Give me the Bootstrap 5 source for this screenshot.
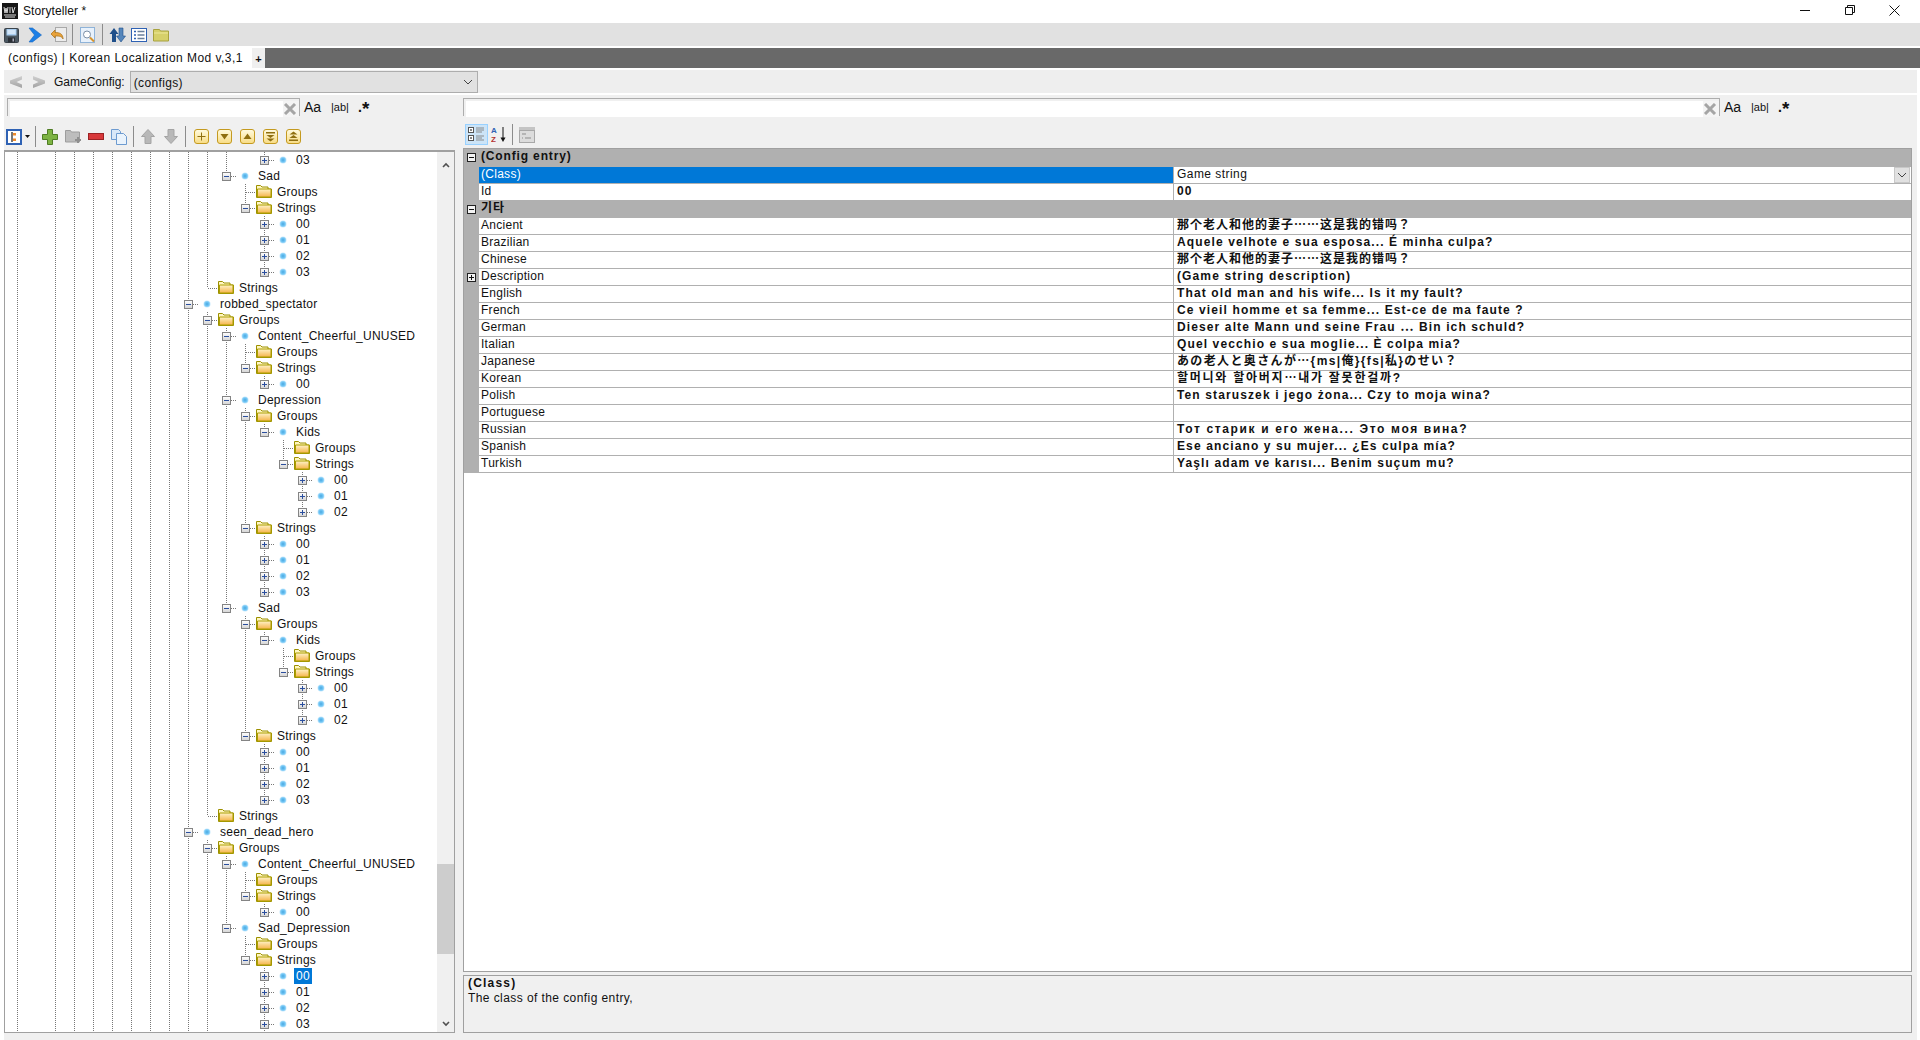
<!DOCTYPE html>
<html lang="en">
<head>
<meta charset="UTF-8" />
<title>Storyteller</title>
<link href="https://cdn.jsdelivr.net/npm/bootstrap@5.3.2/dist/css/bootstrap.min.css" rel="stylesheet" />
<style>
  html, body { height: 100%; }
  body { font-family: "Liberation Sans", "Noto Sans CJK KR", sans-serif; font-size: 12px; line-height: 16px; color: #111; background: #fff; overflow: hidden; }
  .app-shell { height: 1040px; }

  .title-bar { height: 23px; background: #fff; }
  .title-logo { margin: 3px 5px 0 2px; }
  .title-text { letter-spacing: .1px; line-height: 22px; }
  .win-btn { width: 45px; height: 20px; }
  .win-close { margin-right: 3px; }

  .main-tools { height: 23px; background: #e1e1e1; padding-left: 4px; margin-bottom: 2px; }
  .tool-ico { display: block; flex: none; }
  .tool-sep { width: 1px; height: 21px; background: #8c8c8c; flex: none; }

  .tab-strip { height: 20px; background: #696969; }
  .doc-tab { width: 252px; background: #fff; padding-left: 8px; line-height: 20px; letter-spacing: .45px; }
  .plus-tab { width: 13px; background: #efefef; text-align: center; font-weight: 700; font-size: 11px; line-height: 22px; }

  .page-wrap { padding: 2px 3px 0 4px; background: #fff; height: 972px; }
  .cfg-row { height: 23px; background: #eeeeee; margin-bottom: 2px; padding-left: 5px; }
  .cfg-label { margin: 0 5px 0 8px; line-height: 18px; }
  .cfg-select { width: 348px; height: 22px; background: #e1e1e1; border: 1px solid #adadad; padding-left: 3px; letter-spacing: .35px; }
  .cfg-select span { padding-top: 2px; }

  .work-area { background: #f0f0f0; height: 945px; padding-right: 5px; }
  .left-col { width: 451px; flex: none; margin-right: 8px; }
  .search-bar { height: 18px; margin-top: 3px; }
  .left-col .search-bar { padding-left: 3px; }
  .search-box { border: 1px solid #adadad; border-bottom: 0; padding: 2px 0 0 2px; height: 18px; flex: none; }
  .left-col .search-box { width: 293px; }
  .right-col .search-box { width: 1257px; }
  .search-input { border: 0; outline: 0; padding: 0; background: #fff; height: 16px; min-width: 0; }
  .search-x { background: #f4f4f4; width: 16px; height: 16px; }
  .opt-aa { font-size: 14px; margin-left: 4px; width: 27px; }
  .opt-ab { font-size: 11px; width: 27px; }
  .opt-dot { font-size: 14px; font-weight: 700; line-height: 16px; }
  .opt-star { font-size: 19px; font-weight: 700; line-height: 18px; margin-top: 3px; }

  .tree-tools { height: 23px; margin-top: 9px; margin-bottom: 2px; padding-left: 2px; }
  .tree-pane { height: 883px; border: 1px solid #a0a0a0; border-top-width: 2px; background: #fff; margin-bottom: 4px; }
  .tree-list { padding-left: 3px; width: 432px; overflow: hidden; }
  .tree-line { height: 16px; white-space: nowrap; }
  .tw-cell { width: 19px; height: 16px; flex: none; background-repeat: no-repeat; }
  .tw-v { background-image: repeating-linear-gradient(#777 0 1px, transparent 1px 2px); background-position: 9px 0; background-size: 1px 16px; }
  .tw-own-mid { background-image: repeating-linear-gradient(#777 0 1px, transparent 1px 2px), repeating-linear-gradient(90deg, #777 0 1px, transparent 1px 2px); background-position: 9px 0, 10px 8px; background-size: 1px 16px, 9px 1px; }
  .tw-own-end { background-image: repeating-linear-gradient(#777 0 1px, transparent 1px 2px), repeating-linear-gradient(90deg, #777 0 1px, transparent 1px 2px); background-position: 9px 0, 10px 8px; background-size: 1px 8px, 9px 1px; }
  .tw-exp { display: block; margin: 4px 0 0 5px; }
  .tw-dot { display: block; margin: 4px 0 0 5px; }
  .tw-folder { display: block; margin: 0 0 0 1px; }
  .tw-label { margin-left: 3px; letter-spacing: .25px; }
  .tw-label-on { margin-left: 1px; padding: 0 2px; background: #0078d7; color: #fff; }

  .tree-scroll { width: 17px; margin-left: 1px; background: #f0f0f0; flex: none; }
  .scroll-thumb { height: 90px; background: #cdcdcd; margin-bottom: 61px; }
  .scroll-end { height: 17px; }

  .right-col { min-width: 0; }
  .grid-tools { height: 21px; margin-top: 8px; margin-bottom: 3px; padding-left: 2px; }
  .sort-on { width: 23px; height: 21px; background: #cce4f7; border: 1px solid #99d1ff; }
  .prop-grid { height: 824px; border: 1px solid #a0a0a0; background: #fff; }
  .prop-head { height: 17px; background: #b0b0b0; font-weight: 700; letter-spacing: .85px; line-height: 15px; }
  .prop-head-first { height: 18px; }
  .prop-head-text { padding-left: 2px; }
  .prop-gutter { width: 15px; flex: none; background: #b0b0b0; }
  .prop-row { height: 17px; border-bottom: 1px solid #b0b0b0; line-height: 14px; }
  .prop-name { width: 695px; flex: none; padding-left: 2px; letter-spacing: .28px; border-right: 1px solid #b0b0b0; }
  .prop-name-on { background: #0078d7; color: #fff; }
  .prop-value { padding-left: 3px; font-weight: 700; letter-spacing: 1.12px; white-space: nowrap; min-width: 0; }
  .prop-value-plain { font-weight: 400; letter-spacing: .45px; }
  .prop-zh { letter-spacing: 1px; }
  .prop-ja { letter-spacing: 1.36px; }
  .prop-ko { letter-spacing: 1.75px; }
  .prop-ru { letter-spacing: 1.65px; }
  .prop-drop { width: 16px; height: 16px; background: #e1e1e1; border: 1px solid #c8c8c8; margin-right: 1px; }
  .box-ico { display: block; margin: 4px 0 0 3px; }
  .desc-pane { height: 58px; margin-top: 3px; border: 1px solid #a0a0a0; padding: 0 4px; }
  .desc-title { font-weight: 700; letter-spacing: 1.2px; line-height: 14px; }
  .desc-text { letter-spacing: .42px; }

  /* toolbar spacing */
  .t-go { margin-left: 9px; }
  .t-undo { margin-left: 8px; }
  .t-s1 { margin-left: 5px; }
  .t-find { margin-left: 7px; }
  .t-s2 { margin-left: 6px; }
  .t-sync { margin-left: 6px; }
  .t-list { margin-left: 5px; }
  .t-dir { margin-left: 6px; }
  .cfg-next { margin-left: 9px; }
  .l-caret { margin-left: 3px; }
  .l-s1 { margin-left: 5px; }
  .l-add { margin-left: 6px; }
  .l-next { margin-left: 7px; }
  .l-del { margin-left: 6px; }
  .l-s2 { margin-left: 6px; }
  .l-down { margin-left: 9px; }
  .l-y { margin-left: 8px; }
  .g-az { margin-left: 3px; }
  .g-s { margin-left: 4px; }
  .g-page { margin-left: 6px; }
</style>
</head>
<body>
<svg width="0" height="0" class="d-block position-absolute">
  <defs>
    <linearGradient id="fgrad" x1="0" y1="0" x2="0" y2="1"><stop offset="0" stop-color="#fff3c8"/><stop offset="1" stop-color="#f5b34a"/></linearGradient>
    <linearGradient id="ygrad" x1="0" y1="0" x2="0" y2="1"><stop offset="0" stop-color="#fffbe0"/><stop offset="1" stop-color="#f8dc84"/></linearGradient>
    <linearGradient id="agrad" x1="0" y1="0" x2="0" y2="1"><stop offset="0" stop-color="#d0d0d0"/><stop offset="1" stop-color="#a2a2a2"/></linearGradient>
    <radialGradient id="dgrad" cx=".5" cy=".5" r=".5"><stop offset="0" stop-color="#4aa8e0"/><stop offset=".6" stop-color="#72c6f5"/><stop offset="1" stop-color="#c5e8fc"/></radialGradient>
    <linearGradient id="bgrad" x1="0" y1="0" x2="0" y2="1"><stop offset="0" stop-color="#ffffff"/><stop offset="1" stop-color="#d4d4d4"/></linearGradient>
    <symbol id="i-folder" viewBox="0 0 16 14"><path d="M.5 13.500V1.500h4l1.500 1.500h6l0 2h3.500v8.500z" fill="#fff6c0" stroke="#9c9000"/><path d="M1.500 13V5h13.500v8z" fill="url(#fgrad)" stroke="#ac9e00"/></symbol>
    <symbol id="i-minus" viewBox="0 0 9 9"><rect x=".5" y=".5" width="8" height="8" fill="url(#bgrad)" stroke="#848484"/><path d="M2 4.500h5" stroke="#2b4f9e"/></symbol>
    <symbol id="i-plus" viewBox="0 0 9 9"><rect x=".5" y=".5" width="8" height="8" fill="url(#bgrad)" stroke="#848484"/><path d="M2 4.500h5M4.500 2v5" stroke="#2b4f9e"/></symbol>
    <symbol id="i-x" viewBox="0 0 14 12"><path d="M2 1l10 10M12 1L2 11" stroke="#a5a5a5" stroke-width="3"/></symbol>
    <symbol id="i-ybox" viewBox="0 0 15 15"><rect x=".5" y=".5" width="14" height="14" rx="2.500" fill="url(#ygrad)" stroke="#c49a20"/></symbol>
    <symbol id="i-chev" viewBox="0 0 10 6"><path d="M1 1l4 4 4-4" fill="none" stroke="#444"/></symbol>
  </defs>
</svg>

<div class="app-shell d-flex flex-column">
  <!-- window title -->
  <div class="title-bar d-flex align-items-start">
    <svg class="title-logo" width="16" height="16" viewBox="0 0 16 16"><rect width="16" height="16" fill="#161616"/><path d="M2 4l1 6 1-5 1 5 1-6M8 4v6M10 4l1 6 2-6M2 12h12M3 14h10" stroke="#d8d8d8" fill="none"/></svg>
    <span class="title-text flex-grow-1">Storyteller *</span>
    <div class="win-btn d-flex align-items-center justify-content-center"><svg width="10" height="1" viewBox="0 0 10 1"><rect width="10" height="1" fill="#111"/></svg></div>
    <div class="win-btn d-flex align-items-center justify-content-center"><svg width="10" height="10" viewBox="0 0 10 10"><path d="M.5 2.500h7v7h-7zM2.500 2.500v-2h7v7h-2" fill="none" stroke="#111"/></svg></div>
    <div class="win-btn win-close d-flex align-items-center justify-content-center"><svg width="11" height="11" viewBox="0 0 11 11"><path d="M.5.500l10 10M10.500.500l-10 10" stroke="#111"/></svg></div>
  </div>

  <!-- main toolbar -->
  <div class="main-tools d-flex align-items-center">
    <svg class="tool-ico" width="15" height="16" viewBox="0 0 15 16"><rect x=".5" y="1.500" width="14" height="14" rx="1" fill="#4c5862" stroke="#3a424a"/><rect x="2.500" y="2" width="10" height="6.500" fill="#a8cdf0"/><path d="M3.500 4h8M3.500 6h8" stroke="#fff"/><rect x="4" y="10.500" width="7" height="5" fill="#2b3036"/><rect x="8.500" y="11.500" width="1.500" height="3" fill="#aab"/></svg>
    <svg class="tool-ico t-go" width="14" height="16" viewBox="0 0 14 16"><path d="M1 1h3.500l9 7-9 7H1l5.500-7z" fill="#1c7fe6" stroke="#1866c0" stroke-width=".6"/></svg>
    <svg class="tool-ico t-undo" width="17" height="16" viewBox="0 0 17 16"><rect x="5.500" y=".5" width="11" height="14" fill="#ececec" stroke="#a9a9a9"/><path d="M1 7l4-4v2.500c5 0 8 1.500 8 6.500-1-2.500-3-3-8-3V11z" fill="#e8a23a" stroke="#a86f14" stroke-width=".7"/></svg>
    <div class="tool-sep t-s1"></div>
    <svg class="tool-ico t-find" width="16" height="16" viewBox="0 0 16 16"><rect x=".5" y=".5" width="14" height="15" fill="#e8f1fb" stroke="#8fb3d8"/><circle cx="7" cy="7.500" r="3.500" fill="#fff" stroke="#7a8ea6"/><path d="M10 10.500l4 4" stroke="#d8952c" stroke-width="2"/></svg>
    <div class="tool-sep t-s2"></div>
    <svg class="tool-ico t-sync" width="17" height="16" viewBox="0 0 17 16"><path d="M5 1L.5 7H3v8h4V7h2.500z" fill="#1f4f8a"/><path d="M12 15l4.500-6H14V1h-4v8H7.500z" fill="#5586bb" stroke="#1f4f8a" stroke-width=".6"/></svg>
    <svg class="tool-ico t-list" width="16" height="14" viewBox="0 0 16 14"><rect x=".5" y=".5" width="15" height="13" fill="#fff" stroke="#2f62b4"/><path d="M3 3.500h2M3 7h2M3 10.500h2" stroke="#2f62b4" stroke-width="1.500"/><path d="M6.500 3.500h7M6.500 7h7M6.500 10.500h7" stroke="#6a7f9b" stroke-width="1.500"/></svg>
    <svg class="tool-ico t-dir" width="16" height="14" viewBox="0 0 16 14"><path d="M.5 13V1.500h6l1 1.500h8v10z" fill="#d6d06a" stroke="#a8a23e"/><path d="M1 5h14" stroke="#eee89a"/></svg>
  </div>

  <!-- document tabs -->
  <div class="tab-strip d-flex">
    <div class="doc-tab">(configs) | Korean Localization Mod v,3,1</div>
    <div class="plus-tab">+</div>
  </div>

  <div class="page-wrap">
    <div class="cfg-row d-flex align-items-center">
      <svg width="14" height="14" viewBox="0 0 14 14"><path d="M13 1v3.500L7.500 7l5.500 2.500V13L1 8.500v-3z" fill="url(#agrad)"/></svg>
      <svg class="cfg-next" width="14" height="14" viewBox="0 0 14 14"><path d="M1 1v3.500L6.500 7 1 9.500V13l12-4.500v-3z" fill="url(#agrad)"/></svg>
      <span class="cfg-label">GameConfig:</span>
      <div class="cfg-select d-flex align-items-center justify-content-between">
        <span>(configs)</span>
        <svg class="me-1" width="10" height="6"><use href="#i-chev"/></svg>
      </div>
    </div>

    <div class="work-area d-flex">
      <!-- left side: tree -->
      <div class="left-col d-flex flex-column">
        <div class="search-bar d-flex align-items-center">
          <div class="search-box d-flex">
            <input class="search-input flex-grow-1" type="text" />
            <div class="search-x d-flex align-items-center"><svg width="14" height="12"><use href="#i-x"/></svg></div>
          </div>
          <span class="opt-aa">Aa</span><span class="opt-ab">|ab|</span><span class="opt-dot">.</span><span class="opt-star">*</span>
        </div>
        <div class="tree-tools d-flex align-items-center">
          <svg class="tool-ico" width="16" height="16" viewBox="0 0 16 16"><rect x="1" y="1" width="14" height="14" fill="#fff" stroke="#2f62b4" stroke-width="2"/><path d="M6 3v10" stroke="#777" stroke-width="2"/><path d="M7 4h3v2.500H7zM7 9.500h3V12H7z" fill="#ef8b2c"/></svg>
          <svg class="tool-ico l-caret" width="5" height="3" viewBox="0 0 5 3"><path d="M0 0h5L2.500 3z" fill="#111"/></svg>
          <div class="tool-sep l-s1"></div>
          <svg class="tool-ico l-add" width="16" height="16" viewBox="0 0 16 16"><path d="M5.500.5h5v5h5v5h-5v5h-5v-5h-5v-5h5z" fill="#7db343" stroke="#4f7d24"/></svg>
          <svg class="tool-ico l-next" width="17" height="15" viewBox="0 0 17 15"><path d="M.5 13V1.500h5l1 1.500h8v10z" fill="#bdbdbd" stroke="#9d9d9d"/><path d="M10 11h6M13 8v6" stroke="#8f8f8f" stroke-width="2"/></svg>
          <svg class="tool-ico l-del" width="16" height="7" viewBox="0 0 16 7"><rect x=".5" y=".5" width="15" height="6" fill="#d8383a" stroke="#9b2224"/></svg>
          <svg class="tool-ico l-next" width="16" height="16" viewBox="0 0 16 16"><path d="M.5.500h7l2 2v8h-9z" fill="#d9e8f8" stroke="#6d9bd0"/><path d="M5.500 4.500h7l3 3v8h-10z" fill="#eaf3fc" stroke="#6d9bd0"/></svg>
          <div class="tool-sep l-s2"></div>
          <svg class="tool-ico l-next" width="14" height="15" viewBox="0 0 14 15"><path d="M7 .5l6.500 7H10v7H4v-7H.5z" fill="#b8b8b8" stroke="#a4a4a4"/></svg>
          <svg class="tool-ico l-down" width="14" height="15" viewBox="0 0 14 15"><path d="M7 14.500l6.500-7H10v-7H4v7H.5z" fill="#b8b8b8" stroke="#a4a4a4"/></svg>
          <div class="tool-sep l-next"></div>
          <svg class="tool-ico l-y" width="15" height="15" viewBox="0 0 15 15"><use href="#i-ybox"/><path d="M3.500 7.500h8M7.500 3.500v8" stroke="#8f6f10"/></svg>
          <svg class="tool-ico l-y" width="15" height="15" viewBox="0 0 15 15"><use href="#i-ybox"/><path d="M3.500 5h8l-4 5.500z" fill="#8f6f10"/></svg>
          <svg class="tool-ico l-y" width="15" height="15" viewBox="0 0 15 15"><use href="#i-ybox"/><path d="M3.500 10h8l-4-5.500z" fill="#8f6f10"/></svg>
          <svg class="tool-ico l-y" width="15" height="15" viewBox="0 0 15 15"><use href="#i-ybox"/><path d="M3 3h9v1.500H3zM3.500 6h8l-4 3zM3.500 9.500h8l-4 3z" fill="#8f6f10"/></svg>
          <svg class="tool-ico l-y" width="15" height="15" viewBox="0 0 15 15"><use href="#i-ybox"/><path d="M3.500 5.500h8l-4-3zM3.500 9h8l-4-3zM3 10.500h9V12H3z" fill="#8f6f10"/></svg>
        </div>
        <div class="tree-pane d-flex">
          <div class="tree-list" id="treeList"></div>
          <div class="tree-scroll d-flex flex-column">
            <div class="scroll-end d-flex align-items-center justify-content-center mt-1"><svg width="8" height="6" viewBox="0 0 8 6"><path d="M1 5l3-3 3 3" fill="none" stroke="#505050" stroke-width="1.600"/></svg></div>
            <div class="flex-grow-1"></div>
            <div class="scroll-thumb"></div>
            <div class="scroll-end d-flex align-items-center justify-content-center"><svg width="8" height="6" viewBox="0 0 8 6"><path d="M1 1l3 3 3-3" fill="none" stroke="#505050" stroke-width="1.600"/></svg></div>
          </div>
        </div>
      </div>

      <!-- right side: property grid -->
      <div class="right-col flex-grow-1 d-flex flex-column">
        <div class="search-bar d-flex align-items-center">
          <div class="search-box d-flex">
            <input class="search-input flex-grow-1" type="text" />
            <div class="search-x d-flex align-items-center"><svg width="14" height="12"><use href="#i-x"/></svg></div>
          </div>
          <span class="opt-aa">Aa</span><span class="opt-ab">|ab|</span><span class="opt-dot">.</span><span class="opt-star">*</span>
        </div>
        <div class="grid-tools d-flex align-items-center">
          <div class="sort-on d-flex align-items-center justify-content-center"><svg width="17" height="17" viewBox="0 0 17 17"><rect x=".5" y="1.500" width="5" height="5" fill="#fff" stroke="#555"/><rect x=".5" y="9.500" width="5" height="5" fill="#fff" stroke="#555"/><path d="M2 4h2M2 12h2" stroke="#111"/><path d="M8 2h8M8 4h8M8 6h6M8 10h8M8 12h6M8 14h8" stroke="#8a8a8a"/></svg></div>
          <svg class="tool-ico g-az" width="17" height="17" viewBox="0 0 17 17"><text x="0" y="7" font-family="Liberation Sans" font-size="8" font-weight="700" fill="#2f62b4">A</text><text x="0" y="15.500" font-family="Liberation Sans" font-size="8" font-weight="700" fill="#b5322e">Z</text><path d="M12 1v13" stroke="#111"/><path d="M9.500 11.500h5L12 16z" fill="#111"/></svg>
          <div class="tool-sep g-s"></div>
          <svg class="tool-ico g-page" width="16" height="16" viewBox="0 0 16 16"><rect width="16" height="16" fill="#c4c4c4"/><rect x=".5" y="3.500" width="15" height="12" fill="#dcdcdc" stroke="#a8a8a8"/><path d="M3 7h4M3 11h1M6 11h6" stroke="#8d8d8d"/></svg>
        </div>
        <div class="prop-grid d-flex flex-column" id="propGrid"></div>
        <div class="desc-pane mb-1">
          <div class="desc-title">(Class)</div>
          <div class="desc-text">The class of the config entry,</div>
        </div>
      </div>
    </div>
  </div>
</div>

<script>
  // depth, kind (n node, f folder), label, expander (+ - or empty)
  const leaves = (d, names) => names.map((n) => [d, "n", n, "+"]);
  const strings4 = (d) => leaves(d, ["00", "01", "02", "03"]);
  const rows = [
    [13, "n", "03", "+"],
    [11, "n", "Sad", "-"], [12, "f", "Groups", ""], [12, "f", "Strings", "-"], ...strings4(13),
    [10, "f", "Strings", ""],
    [9, "n", "robbed_spectator", "-"], [10, "f", "Groups", "-"],
    [11, "n", "Content_Cheerful_UNUSED", "-"], [12, "f", "Groups", ""], [12, "f", "Strings", "-"], ...leaves(13, ["00"]),
    [11, "n", "Depression", "-"], [12, "f", "Groups", "-"], [13, "n", "Kids", "-"], [14, "f", "Groups", ""], [14, "f", "Strings", "-"], ...leaves(15, ["00", "01", "02"]),
    [12, "f", "Strings", "-"], ...strings4(13),
    [11, "n", "Sad", "-"], [12, "f", "Groups", "-"], [13, "n", "Kids", "-"], [14, "f", "Groups", ""], [14, "f", "Strings", "-"], ...leaves(15, ["00", "01", "02"]),
    [12, "f", "Strings", "-"], ...strings4(13),
    [10, "f", "Strings", ""],
    [9, "n", "seen_dead_hero", "-"], [10, "f", "Groups", "-"],
    [11, "n", "Content_Cheerful_UNUSED", "-"], [12, "f", "Groups", ""], [12, "f", "Strings", "-"], ...leaves(13, ["00"]),
    [11, "n", "Sad_Depression", "-"], [12, "f", "Groups", ""], [12, "f", "Strings", "-"], ...strings4(13),
  ];
  const selectedRow = 51;
  // rows just below the fold, so the guides run on past the bottom
  const depths = rows.map((r) => r[0]).concat([13, 10, 9]);
  const hasNext = (i, col) => {
    for (let j = i + 1; j < depths.length; j++) {
      if (depths[j] <= col) return depths[j] === col;
    }
    return false;
  };

  document.getElementById("treeList").innerHTML = rows.map((r, i) => {
    const [d, kind, label, box] = r;
    let html = "";
    for (let c = 0; c < d; c++) {
      const on = c < 9 ? c !== 1 : hasNext(i, c);
      html += `<div class="tw-cell${on ? " tw-v" : ""}"></div>`;
    }
    html += `<div class="tw-cell ${hasNext(i, d) ? "tw-own-mid" : "tw-own-end"}">`;
    if (box) html += `<svg class="tw-exp" width="9" height="9"><use href="#${box === "+" ? "i-plus" : "i-minus"}"/></svg>`;
    html += `</div><div class="tw-cell">`;
    html += kind === "f"
      ? `<svg class="tw-folder" width="16" height="14"><use href="#i-folder"/></svg>`
      : `<svg class="tw-dot" width="8" height="8" viewBox="0 0 8 8"><circle cx="4" cy="4" r="3.500" fill="url(#dgrad)"/></svg>`;
    html += `</div><span class="tw-label${i === selectedRow ? " tw-label-on" : ""}">${label}</span>`;
    return `<div class="tree-line d-flex">${html}</div>`;
  }).join("");

  const props = [
    ["head", "(Config entry)", "-"],
    ["Id", "00"],
    ["head", "기타", "-"],
    ["Ancient", "那个老人和他的妻子⋯⋯这是我的错吗？", "", "prop-zh"],
    ["Brazilian", "Aquele velhote e sua esposa... É minha culpa?"],
    ["Chinese", "那个老人和他的妻子⋯⋯这是我的错吗？", "", "prop-zh"],
    ["Description", "(Game string description)", "+"],
    ["English", "That old man and his wife... Is it my fault?"],
    ["French", "Ce vieil homme et sa femme... Est-ce de ma faute ?"],
    ["German", "Dieser alte Mann und seine Frau  ⋯ Bin ich schuld?"],
    ["Italian", "Quel vecchio e sua moglie... È colpa mia?"],
    ["Japanese", "あの老人と奥さんが⋯{ms|俺}{fs|私}のせい？", "", "prop-ja"],
    ["Korean", "할머니와 할아버지⋯내가 잘못한걸까?", "", "prop-ko"],
    ["Polish", "Ten staruszek i jego żona... Czy to moja wina?"],
    ["Portuguese", ""],
    ["Russian", "Тот старик и его жена... Это моя вина?", "", "prop-ru"],
    ["Spanish", "Ese anciano y su mujer... ¿Es culpa mía?"],
    ["Turkish", "Yaşlı adam ve karısı... Benim suçum mu?"],
  ];
  const boxIco = (b) => `<svg class="box-ico" width="9" height="9" viewBox="0 0 9 9"><rect x=".5" y=".5" width="8" height="8" fill="#f4f4f4" stroke="#222"/><path d="${b === "+" ? "M2 4.500h5M4.500 2v5" : "M2 4.500h5"}" stroke="#111"/></svg>`;
  const classRow = `<div class="prop-row d-flex"><div class="prop-gutter"></div><div class="prop-name prop-name-on">(Class)</div><div class="prop-value prop-value-plain flex-grow-1">Game string</div><div class="prop-drop d-flex align-items-center justify-content-center"><svg width="10" height="6"><use href="#i-chev"/></svg></div></div>`;
  document.getElementById("propGrid").innerHTML = props.map((p, i) => {
    if (p[0] === "head") {
      return `<div class="prop-head d-flex${i === 0 ? " prop-head-first" : ""}"><div class="prop-gutter">${boxIco(p[2])}</div><div class="prop-head-text">${p[1]}</div></div>` + (i === 0 ? classRow : "");
    }
    return `<div class="prop-row d-flex"><div class="prop-gutter">${p[2] ? boxIco(p[2]) : ""}</div><div class="prop-name">${p[0]}</div><div class="prop-value ${p[3] || ""}">${p[1]}</div></div>`;
  }).join("");
</script>
<script src="https://cdn.jsdelivr.net/npm/bootstrap@5.3.2/dist/js/bootstrap.bundle.min.js"></script>
</body>
</html>
